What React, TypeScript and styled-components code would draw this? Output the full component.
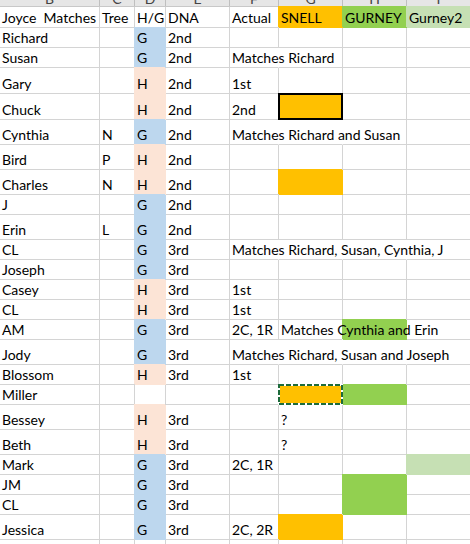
import styled, { createGlobalStyle } from "styled-components";

const GlobalStyle = createGlobalStyle`
  html, body {
    margin: 0;
    padding: 0;
    background: #ffffff;
    overflow: hidden;
  }
  body {
    font-family: Lato, "Liberation Sans", sans-serif;
  }
`;

// column widths incl. the 1px gridline on the right
const COLS = "100px 35px 31px 64px 49px 64px 64px 64px";
const GRID = "#d4d4d4";

const fills = {
  g: "#bdd7ee",
  h: "#fce4d6",
  orange: "#ffc000",
  green: "#92d050",
  lite: "#c6e0b4",
};

type Fill = keyof typeof fills;
type CellData = { t?: string; f?: Fill; flow?: boolean; mark?: "sel" | "copy" };
type RowData = { h: number; cells: (string | CellData)[] };

const Sheet = styled.div`
  width: 470px;
  height: 544px;
  overflow: hidden;
  display: flex;
  flex-direction: column;
`;

const HeaderRow = styled.div`
  display: grid;
  grid-template-columns: ${COLS};
  height: 6px;
  flex: none;
  background: #e6e6e6;
  border-bottom: 1px solid #c8c8c8;
`;

const ColHead = styled.div`
  overflow: hidden;
  border-right: 1px solid #bfbfbf;
  text-align: center;
  font-size: 14px;
  line-height: 20px;
  color: #444444;
  & > span {
    display: block;
    margin-top: -11px;
  }
`;

const Row = styled.div<{ $h: number }>`
  display: grid;
  grid-template-columns: ${COLS};
  height: ${(p) => p.$h}px;
  flex: none;
`;

const Cell = styled.div<{ $fill?: string; $flow?: boolean }>`
  position: relative;
  display: flex;
  align-items: flex-end;
  min-width: 0;
  padding: 0 0 1px 2px;
  font-size: 14px;
  line-height: 17px;
  color: #000000;
  white-space: pre;
  background: ${(p) => p.$fill ?? "transparent"};
  border-right: 1px solid ${(p) => (p.$fill || p.$flow ? "transparent" : GRID)};
  border-bottom: 1px solid ${(p) => (p.$fill ? "transparent" : GRID)};
  box-shadow: ${(p) => (p.$fill ? `-1px -1px 0 ${p.$fill}` : "none")};
`;

const Text = styled.span`
  position: relative;
  z-index: 1;
`;

// active-cell frame
const SelBox = styled.div`
  position: absolute;
  left: -1px;
  top: -1px;
  right: -1px;
  bottom: -1px;
  border: 2px solid #000000;
  z-index: 2;
`;

// copy marquee
const Marquee = styled.svg`
  position: absolute;
  left: -1px;
  top: -1px;
  z-index: 2;
`;

const G: CellData = { t: "G", f: "g" };
const H: CellData = { t: "H", f: "h" };

const rows: RowData[] = [
  {
    h: 21,
    cells: [
      "Joyce  Matches",
      "Tree",
      "H/G",
      "DNA",
      "Actual",
      { t: "SNELL", f: "orange" },
      { t: "GURNEY", f: "green" },
      { t: "Gurney2", f: "lite" },
    ],
  },
  { h: 20, cells: ["Richard", "", G, "2nd", "", "", "", ""] },
  { h: 20, cells: ["Susan", "", G, "2nd", { t: "Matches Richard", flow: true }, "", "", ""] },
  { h: 26, cells: ["Gary", "", H, "2nd", "1st", "", "", ""] },
  { h: 26, cells: ["Chuck", "", H, "2nd", "2nd", { f: "orange", mark: "sel" }, "", ""] },
  {
    h: 25,
    cells: ["Cynthia", "N", G, "2nd", { t: "Matches Richard and Susan", flow: true }, { flow: true }, "", ""],
  },
  { h: 25, cells: ["Bird", "P", H, "2nd", "", "", "", ""] },
  { h: 25, cells: ["Charles", "N", H, "2nd", "", { f: "orange" }, "", ""] },
  { h: 20, cells: ["J", "", G, "2nd", "", "", "", ""] },
  { h: 25, cells: ["Erin", "L", G, "2nd", "", "", "", ""] },
  {
    h: 20,
    cells: [
      "CL",
      "",
      G,
      "3rd",
      { t: "Matches Richard, Susan, Cynthia, J", flow: true },
      { flow: true },
      { flow: true },
      "",
    ],
  },
  { h: 20, cells: ["Joseph", "", G, "3rd", "", "", "", ""] },
  { h: 20, cells: ["Casey", "", H, "3rd", "1st", "", "", ""] },
  { h: 20, cells: ["CL", "", H, "3rd", "1st", "", "", ""] },
  {
    h: 20,
    cells: ["AM", "", G, "3rd", "2C, 1R", { t: "Matches Cynthia and Erin", flow: true }, { f: "green", flow: true }, ""],
  },
  {
    h: 25,
    cells: [
      "Jody",
      "",
      G,
      "3rd",
      { t: "Matches Richard, Susan and Joseph", flow: true },
      { flow: true },
      { flow: true },
      "",
    ],
  },
  { h: 20, cells: ["Blossom", "", H, "3rd", "1st", "", "", ""] },
  { h: 20, cells: ["Miller", "", "", "", "", { f: "orange", mark: "copy" }, { f: "green" }, ""] },
  { h: 25, cells: ["Bessey", "", H, "3rd", "", "?", "", ""] },
  { h: 25, cells: ["Beth", "", H, "3rd", "", "?", "", ""] },
  { h: 20, cells: ["Mark", "", G, "3rd", "2C, 1R", "", "", { f: "lite" }] },
  { h: 20, cells: ["JM", "", G, "3rd", "", "", { f: "green" }, ""] },
  { h: 20, cells: ["CL", "", G, "3rd", "", "", { f: "green" }, ""] },
  { h: 25, cells: ["Jessica", "", G, "3rd", "2C, 2R", { f: "orange" }, "", ""] },
  { h: 20, cells: ["", "", "", "", "", "", "", ""] },
];

const letters = ["B", "C", "D", "E", "F", "G", "H", "I"];

const SheetCell = ({ data }: { data: string | CellData }) => {
  const c: CellData = typeof data === "string" ? { t: data } : data;
  return (
    <Cell $fill={c.f ? fills[c.f] : undefined} $flow={c.flow}>
      {c.t && <Text>{c.t}</Text>}
      {c.mark === "sel" && <SelBox />}
      {c.mark === "copy" && (
        <Marquee width="65" height="21">
          <rect x="1" y="1" width="63" height="19" fill="none" stroke="#ffffff" strokeWidth="2" />
          <rect
            x="1"
            y="1"
            width="63"
            height="19"
            fill="none"
            stroke="#1d6b3c"
            strokeWidth="2"
            strokeDasharray="5 2"
          />
        </Marquee>
      )}
    </Cell>
  );
};

export default function App() {
  return (
    <>
      <GlobalStyle />
      <Sheet>
        <HeaderRow>
          {letters.map((l) => (
            <ColHead key={l}>
              <span>{l}</span>
            </ColHead>
          ))}
        </HeaderRow>
        {rows.map((r, i) => (
          <Row key={i} $h={r.h}>
            {r.cells.map((c, j) => (
              <SheetCell key={j} data={c} />
            ))}
          </Row>
        ))}
      </Sheet>
    </>
  );
}
